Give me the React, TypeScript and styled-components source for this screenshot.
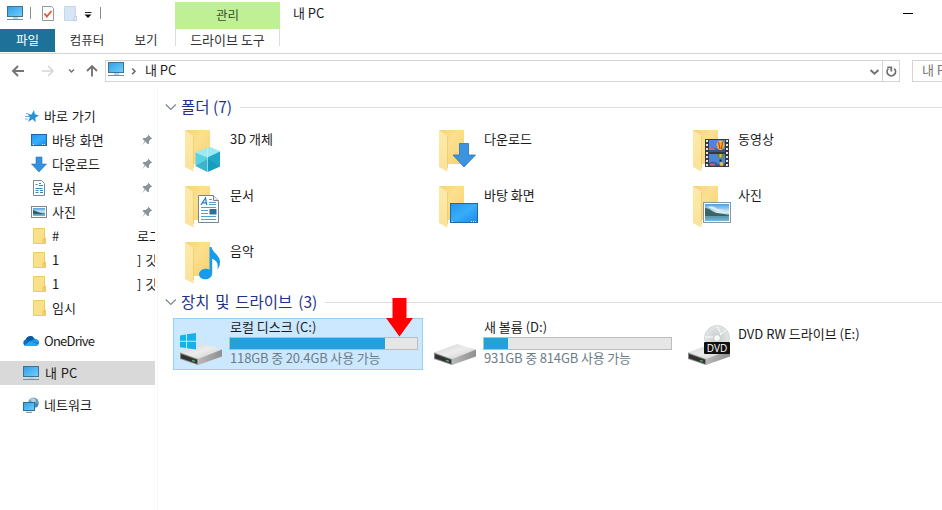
import React from 'react';
import styled, { createGlobalStyle } from 'styled-components';

const Global = createGlobalStyle`
  * { box-sizing: border-box; }
  body { margin: 0; background: #fff; overflow: hidden; }
  svg { display: block; flex: none; }
`;

const Window = styled.div`
  display: flex;
  flex-direction: column;
  width: 942px;
  height: 510px;
  overflow: hidden;
  background: #fff;
  color: #1b1b1b;
  font: 13px/18px 'Noto Sans CJK KR', sans-serif;
  white-space: nowrap;
`;

/* ---------- ribbon ---------- */
const Ribbon = styled.header`
  display: flex;
  height: 54px;
  flex: none;
  border-bottom: 1px solid #d5d5d5;
`;
const RibbonLeft = styled.div`
  width: 175px;
`;
const QuickAccess = styled.div`
  display: flex;
  height: 29px;
  padding: 5px 0 0 7px;
`;
const Divider = styled.i<{ $l: number; $r: number }>`
  width: 1px;
  height: 12px;
  margin: 2px ${p => p.$r}px 0 ${p => p.$l}px;
  background: #8c8c8c;
`;
const QuickIcon = styled.span<{ $gap: number }>`
  margin-right: ${p => p.$gap}px;
`;
const Tabs = styled.nav`
  display: flex;
  height: 23px;
  font-size: 12.5px;
  line-height: 22px;
`;
const Tab = styled.span<{ $w: number; $active?: boolean }>`
  width: ${p => p.$w}px;
  text-align: center;
  color: ${p => (p.$active ? '#fff' : '#333')};
  background: ${p => (p.$active ? '#1e7299' : 'transparent')};
`;
const ToolGroup = styled.div`
  width: 105px;
  padding-top: 2px;
  text-align: center;
  font-size: 12.5px;
  color: #333;
`;
const ToolTitle = styled.div`
  height: 27px;
  line-height: 25px;
  color: #3a5030;
  background: #bff096;
`;
const ToolTab = styled.div`
  height: 17px;
  font-size: 13px;
  line-height: 22px;
  border: solid #dcdcdc;
  border-width: 0 1px;
`;
const Title = styled.div`
  flex: 1;
  padding: 4px 0 0 13px;
`;
const Minimize = styled.i`
  width: 10px;
  height: 1px;
  margin: 13px 29px 0 0;
  background: #000;
`;

/* ---------- address bar ---------- */
const AddressRow = styled.div`
  display: flex;
  flex: none;
  height: 34px;
  padding-top: 6px;
`;
const NavButtons = styled.div`
  flex: none;
  width: 105px;
`;
const Address = styled.div`
  display: flex;
  flex: none;
  width: 795px;
  height: 22px;
  padding-left: 2px;
  border: 1px solid #d4d4d4;
`;
const Crumb = styled.span`
  flex: 1;
  line-height: 18px;
  padding-left: 8px;
`;
const Refresh = styled.span`
  width: 17px;
  border-left: 1px solid #d4d4d4;
`;
const Search = styled.div`
  width: 60px;
  height: 22px;
  margin-left: 12px;
  padding-left: 9px;
  line-height: 18px;
  flex: none;
  color: #777;
  border: 1px solid #d4d4d4;
`;

/* ---------- body ---------- */
const Body = styled.div`
  display: flex;
  flex: 1;
`;
const Sidebar = styled.aside`
  flex: none;
  width: 158px;
  padding-top: 16px;
  border-right: 1px solid #f6f6f6;
`;
const SideRow = styled.div<{ $indent: number; $top?: number; $selected?: boolean }>`
  display: flex;
  align-items: center;
  width: 155px;
  height: 24px;
  margin-top: ${p => p.$top ?? 0}px;
  padding-left: ${p => p.$indent}px;
  word-spacing: 1px;
  background: ${p => (p.$selected ? '#d9d9d9' : 'transparent')};
`;
const SideLabel = styled.span<{ $tight?: boolean }>`
  flex: 1;
  padding-left: 5px;
  line-height: 23px;
  height: 24px;
  letter-spacing: ${p => (p.$tight ? '-0.75px' : 'normal')};
`;
const SideTail = styled.span`
  width: 18px;
  height: 24px;
  line-height: 23px;
  overflow: hidden;
`;
const PinSlot = styled.span`
  width: 14px;
`;
const Content = styled.main`
  flex: 1;
  min-width: 0;
  padding: 9px 0 0 7px;
`;
const GroupHead = styled.div`
  display: flex;
  align-items: center;
  height: 20px;
  color: #1e3287;
  font-size: 15.5px;
  line-height: 20px;
`;
const GroupTitle = styled.h2<{ $gap?: number }>`
  margin: 0 8px 0 4px;
  height: 20px;
  font: inherit;
  line-height: 18px;
  word-spacing: ${p => p.$gap ?? 0}px;
`;
const Rule = styled.i`
  flex: 1;
  height: 1px;
  background: #dedede;
`;
const FolderGrid = styled.div`
  display: grid;
  grid-template-columns: repeat(3, 254px);
  grid-auto-rows: 56px;
  padding: 13px 0 0 20px;
  height: 175px;
`;
const FolderTile = styled.div`
  display: flex;
`;
const FolderName = styled.span`
  padding-left: 5px;
`;
const DriveGrid = styled.div`
  position: relative;
  display: grid;
  grid-template-columns: repeat(3, 254px);
  padding: 6px 0 0 8px;
`;
const DriveTile = styled.div<{ $selected?: boolean }>`
  display: flex;
  width: 250px;
  height: 52px;
  padding-left: 5px;
  border: 1px solid ${p => (p.$selected ? '#9bcff2' : 'transparent')};
  background: ${p => (p.$selected ? '#cce8ff' : 'transparent')};
`;
const DriveInfo = styled.div<{ $top?: number }>`
  padding: ${p => p.$top ?? 0}px 0 0 6px;
`;
const DriveName = styled.div`
  height: 18px;
  line-height: 16px;
  padding-left: 1px;
`;
const Bar = styled.div`
  width: 189px;
  height: 13px;
  border: 1px solid #bcbcbc;
  background: #e6e6e6;
`;
const BarFill = styled.div<{ $w: number }>`
  width: ${p => p.$w}px;
  height: 11px;
  background: #26a0da;
`;
const DriveFree = styled.div`
  padding-left: 1px;
  line-height: 16px;
  letter-spacing: -0.15px;
  color: #6d7d88;
`;
const Pointer = styled.svg`
  position: absolute;
  left: 221px;
  top: -14px;
`;

/* ---------- small icons ---------- */
const HiddenDefs = styled.svg`
  position: absolute;
`;
const Gradients = () => (
  <HiddenDefs width="0" height="0">
    <defs>
      <linearGradient id="screen" x1="0" y1="0" x2="1" y2="1">
        <stop offset="0" stopColor="#2f9fe8" /><stop offset="1" stopColor="#72d0fb" />
      </linearGradient>
      <linearGradient id="desk" x1="0" y1="0" x2="1" y2="1">
        <stop offset="0" stopColor="#2098f0" /><stop offset=".5" stopColor="#38adf8" /><stop offset="1" stopColor="#168cec" />
      </linearGradient>
      <linearGradient id="back" x1="0" y1="0" x2="1" y2="1">
        <stop offset="0" stopColor="#f6d171" /><stop offset=".4" stopColor="#fce090" /><stop offset="1" stopColor="#f6d06c" />
      </linearGradient>
      <linearGradient id="flap" x1="0" y1="0" x2="0" y2="1">
        <stop offset="0" stopColor="#fdeaa8" /><stop offset="1" stopColor="#fbe29a" />
      </linearGradient>
      <linearGradient id="metal" x1="0" y1="0" x2="1" y2="1">
        <stop offset="0" stopColor="#d2d2d2" /><stop offset=".5" stopColor="#ececec" /><stop offset="1" stopColor="#c8c8c8" />
      </linearGradient>
      <linearGradient id="side" x1="0" y1="0" x2="1" y2="0">
        <stop offset="0" stopColor="#b9b9b9" /><stop offset="1" stopColor="#8f8f8f" />
      </linearGradient>
      <linearGradient id="sky" x1="0" y1="0" x2="0" y2="1">
        <stop offset="0" stopColor="#4c9fe0" /><stop offset=".5" stopColor="#d8edf8" /><stop offset=".75" stopColor="#5d93ac" /><stop offset="1" stopColor="#6ec0e4" />
      </linearGradient>
      <radialGradient id="disc">
        <stop offset="0" stopColor="#fafafa" /><stop offset=".4" stopColor="#d0d6d6" /><stop offset="1" stopColor="#e2e6e6" />
      </radialGradient>
    </defs>
  </HiddenDefs>
);

const Monitor = () => (
  <svg width="17" height="16" viewBox="0 0 17 16">
    <rect x=".5" y="1.5" width="15" height="10" fill="url(#screen)" stroke="#3f7396" />
    <path d="M6 12h5v2H6z" fill="#b8d4e2" />
    <path d="M0 14.500h16" stroke="#6990a6" />
  </svg>
);
const CheckDoc = () => (
  <svg width="12" height="16" viewBox="0 0 12 16">
    <path d="M.5 1.5h9l2 2v12H.5z" fill="#fdfafa" stroke="#92999d" />
    <path d="M2.5 8.5l2.3 3L9.5 6" fill="none" stroke="#e2592f" strokeWidth="1.8" />
  </svg>
);
const PaleDoc = () => (
  <svg width="13" height="16" viewBox="0 0 13 16">
    <path d="M.5 1.5h11v14H.5z" fill="#d6e6f6" stroke="#c6d8ea" />
    <path d="M9.500 15.500l1-4h2v4z" fill="#e6f0fa" stroke="#b4c7dc" strokeWidth=".8" />
  </svg>
);
const DropMark = () => (
  <svg width="8" height="16" viewBox="0 0 8 16">
    <path d="M1 7.500h6.500" stroke="#222" />
    <path d="M.5 9.500h7L4 13z" fill="#111" />
  </svg>
);
const NavArrows = () => (
  <svg width="105" height="22" viewBox="0 0 105 22" fill="none" strokeWidth="1.9">
    <g stroke="#747474">
      <path d="M24 11H13M18 6l-5 5 5 5" />
      <path d="M92 16.500V6M87 11l5-5 5 5" />
      <path d="M69 9.500l2.500 2.500L74 9.500" strokeWidth="1.5" />
    </g>
    <path d="M42 11h11M48 6l5 5-5 5" stroke="#d5d5d5" strokeWidth="1.500" />
  </svg>
);
const CrumbChevron = styled.svg`
  margin-left: 6px;
`;
const Chevron = () => (
  <CrumbChevron width="6" height="20" viewBox="0 0 6 20">
    <path d="M1.200 7.500L4 10.300l-2.800 2.800" fill="none" stroke="#666" strokeWidth="1.500" />
  </CrumbChevron>
);
const DownChevron = () => (
  <svg width="15" height="20" viewBox="0 0 15 20">
    <path d="M3.500 9l4 3.700L11.500 9" fill="none" stroke="#727272" strokeWidth="2" />
  </svg>
);
const RefreshIcon = () => (
  <svg width="16" height="20" viewBox="0 0 16 20" fill="none" stroke="#707070" strokeWidth="1.800">
    <path d="M11.300 7.700A4.200 4.200 0 1 1 5.300 7.700" />
    <path d="M4.300 6.400h4v4" />
  </svg>
);
const GroupChevron = () => (
  <svg width="12" height="10" viewBox="0 0 12 10">
    <path d="M.800 2.500l5 5 5-5" fill="none" stroke="#7d8593" strokeWidth="1.200" />
  </svg>
);
const Pin = () => (
  <svg width="12" height="14" viewBox="0 -1 12 14">
    <path d="M7 .500L11.300 4.800 9.800 5 8 7.300 8 9.500 6.800 10.300 4.500 7.800.800 11.200 3.800 7.200 1.500 5 2.500 4H4.800L7 2z" fill="#8a949c" />
  </svg>
);
const Star = () => (
  <svg width="14" height="16" viewBox="0 0 14 16">
    <path d="M9 2l.9 4.200L14 7.500 10.300 9.800l.4 4.400L7.500 11.300 3 13.800 4.900 9.400 2.500 6.200l4 .2z" fill="#2693d9" />
    <path d="M1 5.500h2.500M0 8.500h4M0 11h3" stroke="#64b9ec" />
  </svg>
);
const SmallDesktop = () => (
  <svg width="16" height="16" viewBox="0 0 16 16">
    <rect x=".5" y="2.500" width="15" height="11" fill="url(#desk)" stroke="#1b69a8" />
    <path d="M2 12.500h2M11 12.500h3" stroke="#d8efff" strokeDasharray="1 1" />
  </svg>
);
const SmallDown = () => (
  <svg width="16" height="17" viewBox="0 0 16 17">
    <path d="M5 1h6v7h4.500L8 16 .5 8H5z" fill="#3490e0" stroke="#2976bd" strokeWidth=".6" />
  </svg>
);
const SmallDoc = () => (
  <svg width="16" height="16" viewBox="0 0 16 16">
    <path d="M2.500.500h8l3 3v12h-11z" fill="#fff" stroke="#7a8991" />
    <path d="M4.500 4.500h2M8 3.500h2M8 5.500h4M4.500 8.500h7M4.500 10.500h3M9 10.500h3M4.500 12.500h3M9 12.500h3" stroke="#3087bd" />
  </svg>
);
const SmallPicture = () => (
  <svg width="16" height="16" viewBox="0 0 16 16">
    <rect x=".5" y="2.500" width="15" height="11" fill="#fff" stroke="#7b8790" />
    <path d="M2 4h12v8H2z" fill="url(#sky)" />
    <path d="M2 6c4 1 6 3 12 4H2z" fill="#315f70" />
  </svg>
);
const SmallFolder = () => (
  <svg width="16" height="16" viewBox="0 0 16 16">
    <path d="M2.500.500h11v8l1 2v5h-12z" fill="#fbe08a" stroke="#ebca69" />
    <path d="M11.500 15v-4.500l2-1.500 1 1.500V15z" fill="#f4cc58" />
  </svg>
);
const Cloud = () => (
  <svg width="16" height="12" viewBox="0 0 16 12">
    <path d="M3.500 11A3.300 3.300 0 0 1 2.800 4.500 5 5 0 0 1 12 4.200 3.500 3.500 0 0 1 13.500 11z" fill="#0d6dc0" />
    <path d="M2.800 4.500A5 5 0 0 1 9.500 1.300L10 5l-3 1.500z" fill="#0b57a4" />
    <path d="M7 6l5-1.800a3.500 3.500 0 0 1 3.700 4z" fill="#1e9be6" />
    <path d="M1.500 10.200L7 6l8.300 3.300Q14.800 11 13 11H3.500q-1.300 0-2-.8z" fill="#29a7ea" />
  </svg>
);
const Network = () => (
  <svg width="16" height="16" viewBox="0 0 16 16">
    <circle cx="10.500" cy="5.800" r="5.300" fill="#6f9cb6" />
    <path d="M7 2q4-2 6 1l-1 3-3-1z" fill="#b5d0de" />
    <path d="M13 6l2.500 1-1.500 3.500-2-1z" fill="#4a86ab" />
    <rect x=".5" y="5.500" width="11" height="8" fill="url(#screen)" stroke="#2a6e9d" />
    <path d="M3 15.300h6" stroke="#6990a6" />
  </svg>
);

/* ---------- folder tile icons ---------- */
const Cube = () => (
  <g>
    <path d="M10.500 22L25 17l10 4-12.500 6z" fill="#9aeaf2" />
    <path d="M10.500 22l12 5v15L10.500 36z" fill="#5bd2e3" />
    <path d="M35 21l-12.500 6v15L35 36.500z" fill="#1fa9c8" />
    <path d="M10.500 36L22.500 29l12.500 7.500L22.500 42z" fill="#118fae" opacity=".45" />
    <path d="M22.500 17.500V42M10.500 22l12 5L35 21" fill="none" stroke="#c3f7fa" strokeWidth=".6" />
  </g>
);
const DocBadge = () => (
  <g>
    <path d="M13.500 9.500h15l5 5v22h-20z" fill="#fff" stroke="#7b868c" />
    <path d="M28.500 9.500v5h5" fill="#e7edf0" stroke="#7b868c" />
    <path d="M16 19l4.500-7 1.200 7M17.500 16.800h4" fill="none" stroke="#2a80bd" strokeWidth="1.300" />
    <path d="M24 13.500h3M24 16.500h7M24 18.500h7M16 21.500h15M16 24.500h7M16 27.500h7M16 30.500h15M16 33.500h15" stroke="#5f9dc2" />
    <path d="M24.500 23h7v5.500h-7z" fill="#2f6f98" />
  </g>
);
const Note = () => (
  <path d="M24.500 5h2c.8 5.500 8.500 8 8.500 15 0 3.500-1 5.500-2.800 7.500 1.500-6-.5-9-5-10.800V31c0 4-3.200 6.300-7 6.300S14 35 14 32.300s2.800-5.600 6.500-5.600c1.500 0 3 .3 4 .9z" fill="#169bed" />
);
const DownBadge = () => <path d="M20.500 13.500h9V25h7L25 37 14 25h6.500z" fill="#3c93e0" stroke="#2872b8" strokeWidth=".8" />;
const DesktopBadge = () => (
  <g>
    <rect x="11.500" y="17.500" width="27" height="19" fill="url(#desk)" stroke="#1c68a8" />
    <path d="M13 35.500h2M32 35.500h6" stroke="#d6efff" strokeDasharray="1 1" />
  </g>
);
const FilmBadge = () => (
  <g>
    <path d="M12 9h24v28H12z" fill="#38393c" />
    <path d="M14 10v27M34 10v27" stroke="#e8e8e8" strokeWidth="2" strokeDasharray="2 2" />
    <path d="M16 10h16v12H16zM16 24h16v12H16z" fill="#4a86dc" />
    <path d="M16 19q5-3 9 1l7-1v3H16zM16 33q5-3 9 1l7-1v3H16z" fill="#37558e" />
    <path d="M23.500 15a4 4.500 0 0 1 8 0q-.5 3.500-3 5h-2q-2.500-1.500-3-5z" fill="#efb62e" />
    <path d="M25.500 12l1.500 7M29.500 12l-1 7" stroke="#d13c28" strokeWidth="1.200" />
    <path d="M23.500 24h8q-.5 3-3 4.500h-2q-2.500-1.500-3-4.500z" fill="#6c8a3a" />
    <path d="M26.500 24h2v3.500h-2z" fill="#e6c33a" />
    <path d="M26.500 29.500h2v2h-2z" fill="#222" />
    <circle cx="28.500" cy="34" r="2" fill="#edbc31" />
    <path d="M16 18h5l2 2h-7zM17 33.500h5v2h-5z" fill="#d95f78" />
  </g>
);
const PictureBadge = () => (
  <g>
    <rect x="10.500" y="16.500" width="27" height="20" fill="#fff" stroke="#8a979f" />
    <path d="M12 18h24v17H12z" fill="url(#sky)" />
    <path d="M12 22c5 0 7 4 12 5s8 1 12 2v1H12z" fill="#3b6464" />
    <path d="M14 21q7-2 10 2l8 1-7 1z" fill="#fff" opacity=".7" />
  </g>
);
const Folder = ({ children }: { children: React.ReactNode }) => (
  <svg width="40" height="44" viewBox="0 0 40 44">
    <path d="M0 0h25v34H8z" fill="url(#back)" />
    <path d="M0 0l8.500 6v35.500L0 37z" fill="url(#flap)" />
    <path d="M8.500 6v32" stroke="#eec765" strokeWidth=".7" />
    {children}
  </svg>
);

/* ---------- drives ---------- */
const DriveIcon = ({ kind }: { kind: 'win' | 'disk' | 'dvd' }) => (
  <svg width="44" height="50" viewBox="0 0 44 50">
    <path d="M1 33.500L24 25l19 5.500L19 40z" fill="url(#metal)" />
    <path d="M19 40l24-9.500v7L19 46z" fill="url(#side)" />
    <path d="M1 33.500L19 40v6L1 40z" fill="#888" />
    <path d="M2 35l16 5.800v3.900L2 39.200z" fill="#303331" />
    <path d="M13 41.300l3 1" stroke="#53b569" strokeWidth="1.300" />
    {kind === 'win' && (
      <path d="M1 16.500l6-1v6.300H1zM8 15.300l9-1.300v7.800H8zM1 22.800h6V29l-6-.8zM8 22.800h9v7.700L8 29.200z" fill="#13b2ec" />
    )}
    {kind === 'dvd' && (
      <g>
        <circle cx="30" cy="19" r="12.500" fill="url(#disc)" stroke="#c4c9c9" strokeWidth=".7" />
        <circle cx="30" cy="19" r="3.500" fill="#f8f8f8" stroke="#bfc4c4" />
        <path d="M30 7l4 8M18 18l8 0M39 11l-6 5" stroke="#fff" />
        <rect x="17" y="23" width="26" height="12" rx="1" fill="#111" />
        <text x="30" y="32.800" textAnchor="middle" fontFamily="Open Sans, sans-serif" fontSize="10" fill="#fff">DVD</text>
      </g>
    )}
  </svg>
);

const sideItems = [
  { icon: <SmallDesktop />, label: '바탕 화면', pin: true },
  { icon: <SmallDown />, label: '다운로드', pin: true },
  { icon: <SmallDoc />, label: '문서', pin: true },
  { icon: <SmallPicture />, label: '사진', pin: true },
  { icon: <SmallFolder />, label: '#', tail: '로그' },
  { icon: <SmallFolder />, label: '1', tail: '] 깃' },
  { icon: <SmallFolder />, label: '1', tail: '] 깃' },
  { icon: <SmallFolder />, label: '임시' },
];
const folders = [
  { name: '3D 개체', badge: <Cube /> },
  { name: '다운로드', badge: <DownBadge /> },
  { name: '동영상', badge: <FilmBadge /> },
  { name: '문서', badge: <DocBadge /> },
  { name: '바탕 화면', badge: <DesktopBadge /> },
  { name: '사진', badge: <PictureBadge /> },
  { name: '음악', badge: <Note /> },
];

export default function App() {
  return (
    <Window>
      <Global />
      <Gradients />
      <Ribbon>
        <RibbonLeft>
          <QuickAccess>
            <QuickIcon $gap={0}><Monitor /></QuickIcon>
            <Divider $l={6} $r={11} />
            <QuickIcon $gap={10}><CheckDoc /></QuickIcon>
            <QuickIcon $gap={7}><PaleDoc /></QuickIcon>
            <QuickIcon $gap={0}><DropMark /></QuickIcon>
            <Divider $l={8} $r={0} />
          </QuickAccess>
          <Tabs>
            <Tab $w={55} $active>파일</Tab>
            <Tab $w={64}>컴퓨터</Tab>
            <Tab $w={54}>보기</Tab>
          </Tabs>
        </RibbonLeft>
        <ToolGroup>
          <ToolTitle>관리</ToolTitle>
          <ToolTab>드라이브 도구</ToolTab>
        </ToolGroup>
        <Title>내 PC</Title>
        <Minimize />
      </Ribbon>
      <AddressRow>
        <NavButtons><NavArrows /></NavButtons>
        <Address>
          <Monitor />
          <Chevron />
          <Crumb>내 PC</Crumb>
          <DownChevron />
          <Refresh><RefreshIcon /></Refresh>
        </Address>
        <Search>내 PC</Search>
      </AddressRow>
      <Body>
        <Sidebar>
          <SideRow $indent={25}><Star /><SideLabel>바로 가기</SideLabel></SideRow>
          {sideItems.map((item, i) => (
            <SideRow key={i} $indent={31}>
              {item.icon}
              <SideLabel>{item.label}</SideLabel>
              {item.pin && <PinSlot><Pin /></PinSlot>}
              {item.tail && <SideTail>{item.tail}</SideTail>}
            </SideRow>
          ))}
          <SideRow $indent={23} $top={9}><Cloud /><SideLabel $tight>OneDrive</SideLabel></SideRow>
          <SideRow $indent={23} $top={8} $selected><Monitor /><SideLabel>내 PC</SideLabel></SideRow>
          <SideRow $indent={23} $top={8}><Network /><SideLabel>네트워크</SideLabel></SideRow>
        </Sidebar>
        <Content>
          <GroupHead><GroupChevron /><GroupTitle>폴더 (7)</GroupTitle><Rule /></GroupHead>
          <FolderGrid>
            {folders.map(f => (
              <FolderTile key={f.name}><Folder>{f.badge}</Folder><FolderName>{f.name}</FolderName></FolderTile>
            ))}
          </FolderGrid>
          <GroupHead><GroupChevron /><GroupTitle $gap={2.3}>장치 및 드라이브 (3)</GroupTitle><Rule /></GroupHead>
          <DriveGrid>
            <DriveTile $selected>
              <DriveIcon kind="win" />
              <DriveInfo>
                <DriveName>로컬 디스크 (C:)</DriveName>
                <Bar><BarFill $w={155} /></Bar>
                <DriveFree>118GB 중 20.4GB 사용 가능</DriveFree>
              </DriveInfo>
            </DriveTile>
            <DriveTile>
              <DriveIcon kind="disk" />
              <DriveInfo>
                <DriveName>새 볼륨 (D:)</DriveName>
                <Bar><BarFill $w={24} /></Bar>
                <DriveFree>931GB 중 814GB 사용 가능</DriveFree>
              </DriveInfo>
            </DriveTile>
            <DriveTile>
              <DriveIcon kind="dvd" />
              <DriveInfo $top={7}><DriveName>DVD RW 드라이브 (E:)</DriveName></DriveInfo>
            </DriveTile>
            <Pointer width="28" height="39" viewBox="0 0 28 39">
              <path d="M6.500 0h14v20H27L13.500 38.500 0 20h6.500z" fill="#fe0000" />
            </Pointer>
          </DriveGrid>
        </Content>
      </Body>
    </Window>
  );
}
